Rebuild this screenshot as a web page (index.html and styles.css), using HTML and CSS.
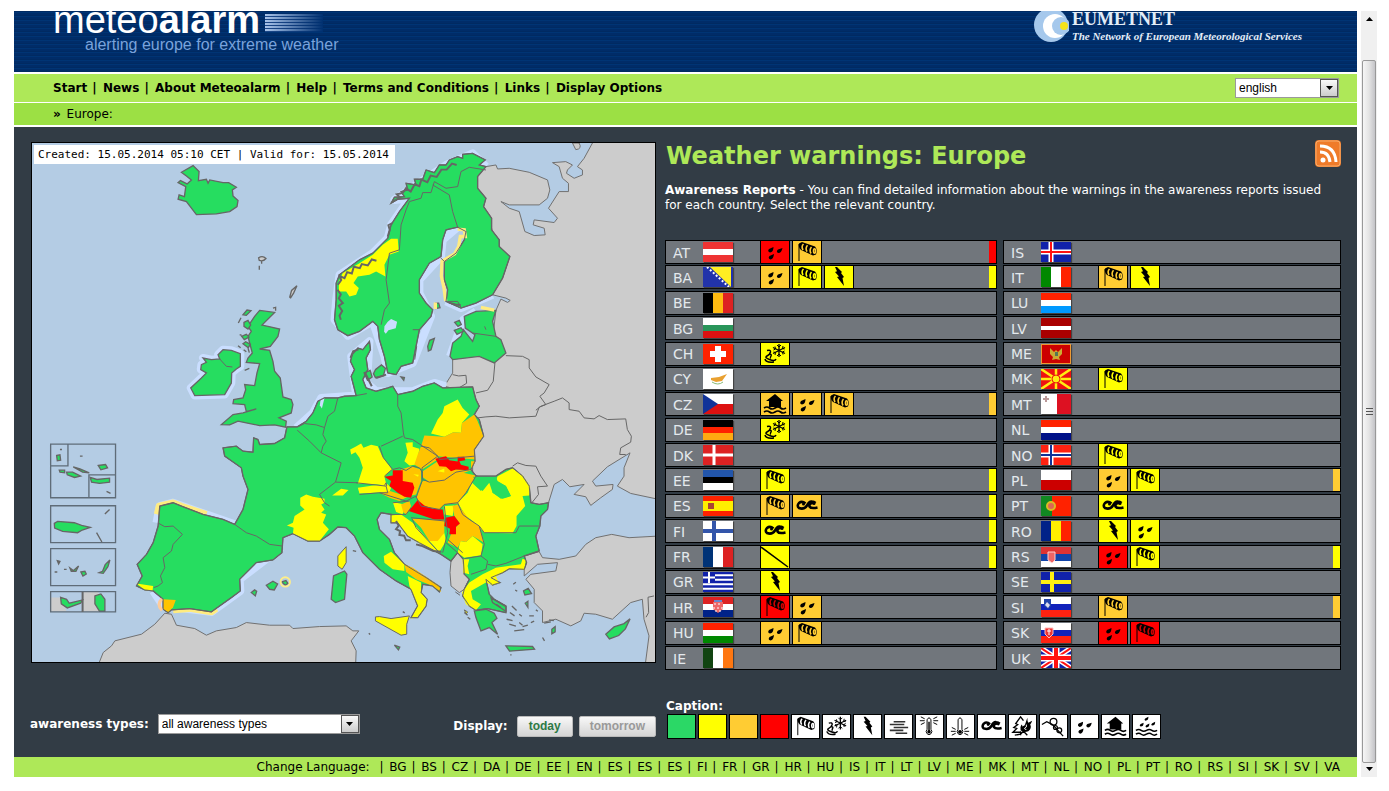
FILE: index.html
```html
<!DOCTYPE html>
<html lang="en">
<head>
<meta charset="utf-8">
<title>Meteoalarm - Weather warnings: Europe</title>
<link rel="stylesheet" href="styles.css">
</head>
<body>
<svg class="defs" aria-hidden="true">
<symbol id="wind" viewBox="0 0 28 22"><path d="M6 20V3" stroke="#000" stroke-width="1" fill="none"/><path d="M6 2.500L9 1l13 4.500q3 3.500 1 8l-3 1L8 9Q5 6 6 2.500z" fill="#000"/><g fill="none" stroke="var(--c)" stroke-width="1.600"><path d="M10.500 3q-2.500 2.500-.5 6M14.500 4.200q-2.500 3-.5 6.500M18.500 6q-2.500 3-.5 6.500"/><ellipse cx="21.500" cy="10" rx="1" ry="2.200"/></g></symbol>
<symbol id="rain" viewBox="0 0 28 22"><g fill="#000"><path d="M12.500 6q0 5-3.500 5.500-3-1-1-3.500zM21.500 7q-1 5-4 5-3-1-.5-3.500zM13 13q-.5 5-3.500 5.500-3-1-1-3.500z"/></g></symbol>
<symbol id="bolt" viewBox="0 0 28 22"><path d="M12 1l5 5-1 1 3 4-1.500 1L19 20l-7-9 2-.5-4-4.500 2-.8L10 1z" fill="#000"/></symbol>
<symbol id="snow" viewBox="0 0 28 22"><g stroke="#000" fill="none"><path stroke-width="1.300" d="M18 1v13M12 4.500l12 6M12 10.500l12-6"/><path d="M16 2l2 2 2-2M16 13l2-2 2 2M12.500 7l2-1-.5-2.500M23.500 8l-2 1 .5 2.500M12.500 9l2 .5-.5 2.500M23.500 6l-2-.5.5-2.500"/><path stroke-width="1.500" d="M6 7.500q4-1 3.500 1.500T6 13t2.500 3.500 6.500-.5M4 16q1 4 9 3M8 11q3 0 2 2t0 2"/></g></symbol>
<symbol id="wave" viewBox="0 0 28 22"><path d="M12.500 8.500Q9 5.500 6 8q-2.500 3 0 5 5 2 8-2.500Q16 6 19 6.500q2 0 3.500 1.500M20 8q-4 0-3.500 3.500Q18 14 24.500 12.500" fill="none" stroke="#000" stroke-width="2.600"/><circle cx="10.500" cy="9" r="1.500"/><circle cx="21" cy="8.500" r="1.500"/></symbol>
<symbol id="flood" viewBox="0 0 28 22"><path d="M14 1l8 7h-2v6H8V8H5z" fill="#000"/><path d="M3 15q3-2 5.500 0t5.500 0 5.500 0 5.500 0M3 19q3-2 5.500 0t5.500 0 5.500 0 5.500 0" fill="none" stroke="#000" stroke-width="1.700"/></symbol>
<symbol id="rainflood" viewBox="0 0 28 22"><path d="M16 1q0 4-3 4-2-1 0-2.500zM11 7q0 4-3 4-2-1 0-2.500zM17 8q0 4-3 4-2-1 0-2.500zM23 6q0 4-3 4-2-1 0-2.500z" fill="#000"/><path d="M3 15q3-2 5.500 0t5.500 0 5.500 0 5.500 0M3 19q3-2 5.500 0t5.500 0 5.500 0 5.500 0" fill="none" stroke="#000" stroke-width="1.500"/></symbol>
<symbol id="fog" viewBox="0 0 28 22"><path d="M9 6h12M5 9h15M9 12h15M5 15h14M11 18h12" stroke="#333" stroke-width="1.600"/></symbol>
<symbol id="heat" viewBox="0 0 28 22"><g fill="none" stroke="#000"><path d="M11.500 14V4q2-4 4 0v10q2 2 0 4.500-2 2-4 0-2-2.500 0-4.500z"/><path d="M9 3L5 1M9 5H4M9 7l-4 2M18 3l4-2M18 5h5M18 7l4 2"/></g><circle cx="13.500" cy="16.500" r="1.800"/><path d="M13.500 6v10" stroke="#000" stroke-width="1.500"/></symbol>
<symbol id="cold" viewBox="0 0 28 22"><g fill="none" stroke="#000"><path d="M11.500 14V4q2-4 4 0v10q2 2 0 4.500-2 2-4 0-2-2.500 0-4.500z"/><path d="M9 14l-4-2M9 16H4M9 18l-4 2M18 14l4-2M18 16h5M18 18l4 2"/></g><circle cx="13.500" cy="16.500" r="2"/></symbol>
<symbol id="fire" viewBox="0 0 28 22"><path d="M12 17H4l4-4-3-1 4-3-2-1 5-7 3 4M12 20v-4M6 20l6-1 3-3 4 4" fill="none" stroke="#000" stroke-width="1.400"/><path d="M19 2q0 4 1 5l4-2q-1 3-2 4 2 4-2 7-5 2-8-1-1-3 1-6 1 1 1 2 3-1 3-3z" fill="#000"/><path d="M18 9q1 3-2 4 0 1 2 1" fill="none" stroke="var(--c)"/></symbol>
<symbol id="avalanche" viewBox="0 0 28 22"><g fill="none" stroke="#000" stroke-width="1.300"><path d="M2 9l5-3 6 3 11 12"/><circle cx="14" cy="6" r="3.500"/><circle cx="20" cy="15" r="2.500"/><circle cx="16" cy="12" r="2"/></g></symbol>
<symbol id="line" viewBox="0 0 28 22"><path d="M0 1l27 20" stroke="#000" stroke-width="1.500"/></symbol>
<symbol id="arrow" viewBox="0 0 7 4"><path d="M0 0h7L3.500 4z"/></symbol>
</svg>

<div class="window">
<div class="page">
<header class="banner">
  <a class="brand" href="#"><span class="name">meteo<b>alarm</b><i class="bars"></i></span><span class="tagline">alerting europe for extreme weather</span></a>
  <a class="network" href="#">
    <svg viewBox="0 0 35 35" class="moon" aria-hidden="true"><circle cx="17" cy="14" r="17" fill="#a5c8ec"/><circle cx="21" cy="15" r="12" fill="#fff"/><circle cx="27" cy="15" r="9" fill="#a5c8ec"/><circle cx="30" cy="15" r="4" fill="#f4e31a"/></svg>
    <span><b class="net">EUMETNET</b><em>The Network of European Meteorological Services</em></span>
  </a>
</header>
<nav class="menu">
  <div class="links"><a href="#">Start</a> | <a href="#">News</a> | <a href="#">About Meteoalarm</a> | <a href="#">Help</a> | <a href="#">Terms and Conditions</a> | <a href="#">Links</a> | <a href="#">Display Options</a></div>
  <span class="picker lang"><select aria-label="Language"><option>english</option></select><span class="drop"><svg><use href="#arrow"/></svg></span></span>
</nav>
<div class="crumbs"><b>»</b> <a href="#">Europe:</a></div>

<main>
<figure class="map">
<figcaption>Created: 15.05.2014 05:10 CET | Valid for: 15.05.2014</figcaption>
<svg viewBox="6 9 1872 1560" role="img" aria-label="Map of weather warnings in Europe">
<defs>
<path id="mainland" d="M580 925L620 920 640 935 670 938 672 895 685 900 690 915 735 912 765 895 772 862 803 862 830 845 850 820 865 785 885 775 925 775 945 770 980 768 965 710 975 690 963 665 968 645 985 625 1000 630 1020 605 1023 630 1010 655 1015 690 1000 720 1010 745 1040 755 1075 745 1090 740 1105 765 1150 755 1180 740 1215 730 1240 745 1330 742 1340 780 1350 800 1335 825 1350 840 1363 890 1335 930 1337 965 1325 990 1340 1010 1400 1010 1430 990 1450 985 1480 1010 1500 1040 1505 1090 1530 1095 1558 1090 1555 1110 1535 1130 1532 1160 1520 1190 1530 1235 1485 1250 1492 1270 1485 1290 1440 1288 1420 1300 1385 1315 1412 1330 1390 1337 1370 1320 1380 1365 1395 1380 1430 1400 1430 1420 1375 1408 1340 1413 1320 1400 1300 1370 1305 1350 1320 1320 1305 1305 1302 1260 1285 1240 1265 1265 1235 1245 1170 1210 1135 1190 1105 1150 1085 1150 1085 1125 1055 1120 1043 1140 1050 1170 1080 1200 1095 1240 1125 1275 1190 1315 1235 1345 1230 1358 1210 1340 1180 1335 1175 1360 1193 1380 1190 1400 1165 1435 1145 1435 1165 1400 1145 1350 1100 1325 1050 1290 1000 1240 975 1190 950 1165 925 1163 900 1185 870 1205 835 1205 790 1183 760 1195 757 1240 730 1262 680 1270 655 1295 630 1320 632 1355 605 1375 545 1418 480 1408 425 1412 415 1420 400 1410 400 1380 370 1355 345 1352 320 1340 337 1310 322 1275 350 1245 370 1210 385 1160 390 1100 430 1090 455 1100 520 1125 580 1140 615 1155 640 1110 655 1050 640 1010 635 985 585 950z"/>
<path id="nordic" d="M915 540L925 570 955 588 990 575 1030 545 1045 560 1050 600 1065 650 1075 700 1100 705 1115 680 1150 670 1162 610 1170 570 1205 530 1210 510 1190 490 1170 460 1170 420 1200 370 1235 350 1240 300 1250 270 1285 262 1310 275 1305 300 1280 340 1245 365 1245 420 1255 450 1250 485 1295 505 1340 490 1390 465 1420 415 1442 350 1410 320 1410 300 1387 270 1387 235 1363 200 1370 175 1345 145 1345 110 1370 80 1350 75 1368 60 1330 40 1300 43 1300 55 1285 50 1260 60 1250 75 1230 75 1215 98 1190 90 1180 118 1155 118 1160 135 1130 130 1135 150 1115 155 1125 170 1095 172 1085 190 1105 178 1140 175 1110 215 1085 255 1075 295 1030 340 990 360 930 405 920 430 920 480z"/>
<path id="baltic" d="M1305 530L1340 515 1400 512 1390 545 1400 590 1415 600 1430 640 1395 670 1350 650 1270 660 1262 650 1270 610 1295 590 1302 570 1330 605 1337 585 1308 565z"/>
<path id="britain" d="M690 512L735 518 697 556 715 560 750 568 745 590 722 620 690 628 720 632 730 665 735 695 752 715 760 772 785 780 790 795 785 820 748 835 770 845 768 863 735 856 690 858 650 850 625 845 600 856 575 855 610 825 640 820 680 808 650 816 645 795 610 792 612 780 640 775 648 750 645 735 675 738 682 700 690 672 650 668 655 655 668 640 660 610 655 590 665 575 655 560 675 530z"/>
<path id="ireland" d="M565 645L580 630 605 632 632 642 632 680 620 688 606 700 605 730 585 765 495 768 483 745 515 715 530 700 513 690 515 675 530 668 520 655 545 660 570 658z"/>
</defs>
<rect x="0" y="0" width="1890" height="1590" fill="#b4cce4"/>
<g class="other">
<path d="M1695 0L1665 55 1645 80 1660 90 1660 105 1635 115 1612 100 1615 90 1630 75 1610 65 1570 68 1590 80 1600 115 1618 130 1618 155 1590 155 1558 205 1585 235 1575 248 1515 240 1512 255 1545 265 1548 285 1515 287 1487 275 1470 215 1440 205 1415 185 1440 195 1530 195 1555 175 1562 150 1555 120 1500 97 1440 85 1405 87 1400 75 1370 80 1335 110 1340 200 1380 235 1400 320 1420 350 1390 465 1430 475 1443 482 1435 488 1415 478 1400 512 1390 600 1270 660 1270 700 1245 740 1330 760 1330 1000 1490 1110 1558 1090 1575 1035 1600 1020 1622 1042 1665 1035 1635 1065 1670 1072 1685 1098 1715 1075 1750 1050 1752 1035 1700 1040 1690 1025 1735 982 1803 940 1785 985 1785 1010 1765 1040 1805 1062 1890 1080V0z"/>
<path d="M1630 9l20 0q10 18-10 20z"/>
<path d="M1890 1190L1800 1195 1748 1185 1700 1195 1670 1215 1640 1250 1590 1260 1540 1255 1530 1237 1485 1250 1485 1310 1525 1275 1585 1270 1580 1295 1505 1305 1490 1320 1515 1350 1515 1390 1540 1415 1540 1450 1580 1440 1625 1460 1655 1445 1665 1422 1700 1425 1750 1440 1805 1390 1840 1380 1845 1440 1860 1490 1847 1590H1890z"/>
<path d="M200 1590L220 1540 245 1520 255 1505 335 1485 375 1455 405 1422 425 1425 440 1458 495 1468 530 1488 560 1475 620 1465 650 1450 720 1458 780 1458 790 1468 870 1462 950 1460 970 1475 988 1475 965 1505 980 1535 978 1590z"/>
<path d="M1265 1265L1285 1240 1305 1260 1305 1305 1320 1320 1305 1350 1290 1360 1265 1340 1262 1300z"/>
</g>
<g class="halo"><use href="#ireland"/><path d="M800 865L850 820 875 775 980 768 965 650 1020 605 1015 690 1000 720 1040 755 1150 755 1215 730 1250 740"/><path d="M1370 80L1330 40 1250 75 1160 135 1095 180 1140 175 1085 255 1075 295 1030 340 930 405 920 480 915 540 955 588 1030 545 1065 650 1075 700 1150 670 1205 530 1170 460 1170 420 1235 350 1240 300 1285 262M1250 485L1295 505 1390 465M1340 515L1302 540 1262 650"/><path d="M380 1150L390 1100 430 1090 615 1155M755 1225L630 1320 632 1355 545 1418 400 1400 370 1355"/></g>
<path class="warnhalo" d="M382 1125L388 1100 430 1090 455 1100 530 1125M430 1412L480 1408 545 1418 560 1408"/>
<g class="green">
<use href="#britain"/><use href="#ireland"/><use href="#nordic"/><use href="#baltic"/><use href="#mainland"/>
<path d="M455 97L490 77 508 95 506 122 530 118 535 130 540 120 580 128 597 128 620 142 608 150 610 168 625 182 622 200 600 215 560 222 500 224 470 185 445 178 448 165 464 170 468 140 445 128 452 122 472 132 485 120 470 108z"/>
<path d="M640 525l12-14 12 2-14 14zM643 548l12-6 8 14-8 12-12-8zM636 590l14-6 8 8-14 8zM640 612l8-6 14 8-6 10zM625 618l8 6M626 550l8-16M645 692l14-6M630 585l6 2M642 630l8 6M655 625l4 14"/>
<path d="M1038 690l18-14 12 10-6 22-24 6-6-12zM1004 700l18-8 6 20-14 10zM1276 548l14-6 6 12-10 6zM1275 572l20-8 8 10-20 10zM1195 620l6-18 14-6-10 34-8 4zM1115 712l10 2-2 8zM1220 490l8 0 4 14-12 2z"/>
<path d="M912 1310L945 1295 952 1305 945 1380 918 1390 905 1380zM710 1338l20-12 14 8-10 18-14-2zM665 1360l10-8 6 4-4 14zM757 1328l12-4 6 8-8 6z"/>
<path d="M1335 1415L1370 1410 1395 1422 1403 1437 1388 1450 1405 1485 1380 1465 1355 1475 1340 1435zM1430 1520l80 2 6 8-75 6zM1730 1485l25-22 30-10 18-14-14 30-20 20-28 10zM1568 1470l10-8 0 16-10 6zM1483 1355l14-8 10 16-20 4zM1488 1392l8-6v18zM1385 1375L1430 1402 1430 1416 1390 1390z"/>
<path d="M1452 1335l8-6M1458 1352l6 4M1448 1400l14 14M1442 1420l14 10M1432 1440l18 4M1440 1455l20 6M1470 1425l8 6M1470 1450l10 8M1480 1462l16-4M1455 1475l30-4M1500 1430l14 0M1505 1450l10-4M1520 1412l6 4M1540 1495l6 10M1545 1452l20-4M1560 1442l14 2M1415 1405l-14-10M1405 1490l4 6M1445 1545v4M1305 1420l10 8M1315 1434l8 6M1095 1518l16 6-4 8zM1018 1482l4 4M1120 1417l6 4M970 1234l10 2"/>
</g>
<path class="lake" d="M1065 560l10-14 10-8 18 8-4 20-22 6-8 10-5-6z"/>
<path class="lake" d="M873 780l12-5-8 32-6-10z"/>
<g transform="translate(900 0)"><path class="yellow" d="M205 297L185 297 160 315 130 345 90 370 40 400 28 425 28 455 50 455 60 470 80 465 88 445 72 430 85 410 120 405 140 395 168 410 165 375 180 345 208 335z"/><path class="coastwarn" d="M385 268l20 2 3 20-15 0-5 30-12 22-38 22-2 45 8 35 5 40M455 503l40 8M318 488v20"/></g>
<g transform="translate(900 750)">
<g class="yellow">
<path d="M62 180L78 172 95 162 102 175 125 166 145 170 158 200 188 240 165 262 172 290 150 285 85 282 100 235 90 205 78 188 65 195z"/>
<path d="M305 132L325 90 340 70 345 50 385 30 400 55 420 75 398 100 395 130 372 128 345 142z"/>
<path d="M228 160L250 158 250 172 270 178 262 225 240 228 225 215 235 190z"/>
<path d="M85 295L172 282 185 295 180 308 90 312z"/><path d="M8 318L35 298 57 302 40 318z"/>
<path d="M385 340L415 310 428 280 455 305 470 280 490 280 490 310 520 328 545 320 530 290 500 275 505 260 550 237 580 258 603 292 600 318 580 320 588 350 562 380 562 410 550 432 465 430 430 395 410 380z"/>
<path d="M183 378L215 375 250 400 330 490 270 462 235 440 205 400 185 400z"/><path d="M190 338L225 345 220 375 200 368z"/><path d="M343 350L375 348 370 380 345 375z"/>
<path d="M300 455L345 430 350 455 330 488z"/><path d="M393 455L410 458 430 440 460 465 455 498 405 505 385 490z"/><path d="M400 510L420 510 415 530 420 555 402 550z"/>
<path d="M398 610L420 580 460 555 500 535 575 525 580 508 590 512 585 542 540 538 500 562 510 582 490 588 470 580 425 605 430 630 455 645 440 663 410 645z"/>
<path d="M163 500L185 487 225 525 225 545 190 540 165 520z"/><path d="M235 560L275 580 275 610 293 630 290 650 265 685 245 688 265 650 240 590z"/>
</g>
<g class="yellow edged"><path d="M138 683L150 682 185 688 240 680 232 705 232 735 215 738 138 695z"/><path d="M25 500L50 472 50 520 38 540 25 530z"/><path d="M405 662l10 6-4 6zM378 608l14 10"/></g>
<g class="orange">
<path d="M285 138L345 142 372 128 395 130 398 100 435 75 445 95 463 140 435 180 438 210 325 200 275 170z"/><path d="M275 170L325 190 325 210 278 240 255 225 265 195z"/>
<path d="M215 240L245 230 275 240 275 275 260 315 240 320 215 300z"/><path d="M150 310L182 305 235 322 210 335 180 325z"/>
<path d="M280 245L325 215 380 240 425 240 425 215 438 215 425 242 345 272 300 278 278 262z"/>
<path d="M270 295L280 275 325 275 380 245 440 258 410 310 385 342 345 345 330 360 275 350 262 325z"/>
<path d="M215 345L240 335 245 350 232 375 222 370z"/><path d="M248 388L345 392 345 430 325 455 300 455 275 415z"/>
<path d="M370 350L385 345 420 390 450 410 465 460 430 440 410 458 395 455 385 475 355 460 365 435 390 400 375 380z"/>
<path d="M225 525L250 535 330 590 335 608 310 590 260 570 230 548z"/>
</g>
<g class="red">
<path d="M165 262L190 258 190 242 220 242 220 275 250 280 255 295 245 325 225 322 205 310 180 290 185 275z"/><path d="M318 208L350 200 360 212 385 216 385 202 405 202 408 212 390 215 395 226 418 232 418 242 380 240 365 245 350 232 330 230z"/>
<path d="M238 365L265 332 285 348 310 358 340 360 345 390 315 390z"/><path d="M348 385L375 380 392 402 380 412 380 435 360 435 362 418 345 410z"/>
</g>
<path class="yellow" d="M325 245l20-8 0 12z"/><path class="yellow" d="M252 254l16 2-2 6z"/>
<path class="green" d="M432 262L500 262 505 275 530 290 545 320 515 328 490 310 480 280 460 305 440 290zM560 410" style="stroke:none"/>
</g>
<path class="yellow" d="M830 1065L850 1072 885 1078 885 1090 875 1095 885 1110 875 1120 890 1125 880 1150 898 1170 870 1205 835 1205 790 1183 792 1165 772 1158 790 1150 795 1130 825 1110 812 1098 812 1075z"/>
<path class="yellow" d="M320 1333L370 1340 368 1355 345 1352z"/><path class="orange" d="M400 1380l38 2-8 22-15 15-15-10z"/><path d="M397 1378q-18 18 0 35" fill="none" stroke="#fc9" stroke-width="10"/><circle cx="767" cy="1328" r="14" fill="none" stroke="#fe8" stroke-width="6"/>
<g class="line">
<use href="#mainland"/><use href="#nordic"/>
<path d="M570 658L590 680 608 682M803 872L840 905 875 940 880 920 890 905M875 940L935 970 918 1028 870 1065 885 1090 900 1100M805 862L825 852 860 856 885 864 895 830 915 815 925 775M885 864L880 885 890 905M918 1028L985 1030M615 1155L650 1180 680 1190 720 1215 757 1220M387 1152L405 1162 430 1160 458 1185 430 1215 425 1235 400 1255 405 1285 392 1310 398 1330 385 1340 372 1345M980 768L1012 762"/>
<path d="M1055 555L1065 510 1080 490 1070 420 1080 340 1110 330 1115 255 1130 210 1140 185 1175 175 1180 158 1205 158 1215 125 1250 145 1285 140 1295 95 1320 82 1370 90M1210 135L1260 165 1270 215 1285 262M1330 580L1400 590M1366 560l4 10M1255 485l30 0 10 18M1235 355l10 10M1162 620l-6 40M1170 570l-20 0"/>
<path d="M1105 765L1105 800 1115 820 1122 880 1125 895 1150 900 1180 920 1210 940 1225 950M1055 920L1120 890M1050 920L1062 955 1090 990 1110 985 1130 993 1150 980 1170 985 1180 1000M1065 1010L1088 990M1175 920L1200 925 1225 950 1230 960 1335 950M1225 950L1178 985 1178 1025 1160 1075M1178 995L1180 1020 1200 1028 1245 1022 1280 998 1325 990M1340 1010L1310 1060 1285 1090 1245 1095 1230 1110 1175 1100 1160 1072M1065 1038L1070 1030 1072 1040M990 1065L1050 1060 1130 1085 1160 1070M980 1030L1070 1040 1075 1060 1050 1060M1090 1090L1140 1085M1085 1125L1130 1125 1145 1105M1145 1135L1250 1145 1255 1180 1240 1240M1148 1138L1160 1165 1230 1240M1245 1100L1250 1145M1285 1090L1300 1125 1320 1140 1350 1160 1365 1180 1460 1180 1470 1160 1530 1160M1350 1160L1365 1215 1355 1250 1305 1258M1355 1250L1375 1265 1370 1290 1325 1305M1250 1210L1285 1240M1375 1275L1400 1280 1430 1272 1485 1250M1255 1200L1300 1240"/>
<path d="M1345 835L1370 832 1400 830 1440 835 1520 830 1530 803 1550 795M1550 795L1532 770 1545 760 1560 735 1520 712 1500 685 1500 660 1480 650 1430 648M1520 812L1535 800 1575 785 1600 775 1620 790 1620 810 1650 815 1665 835 1695 838 1710 828 1735 840 1790 838 1795 870 1807 890 1805 908 1775 925 1772 945 1790 945M1340 760L1375 752 1392 725 1397 670M1270 705l18 4 22-2 2 24-20 12M1450 980L1465 970 1490 978 1520 980 1535 1010 1555 1040 1525 1042 1528 1065 1508 1090M1875 1370l-18 4 2 46-8 14"/>
</g>
<g class="coast"><path d="M925 435l10-14-4-12 14 6 8-18 14 4 6-20 18 4 6-12 18 4 12-18 14 4M924 450l10 14-6 12 12 14-12 8 10 16-8 14 4 12M1090 185l22-12-10-10 18-4 10-14 14 10 12-22 14 6 6-20 18 8 10-20 18 4 14-22 16 0 16-18 14 4M1075 290l6-20-4-14 12-6M963 655l8-20 16-6M1100 1145l8 14-8 10 12 6-2 12 14 2 6 14 14 0M1160 1215l16 4 18 8 18 8 24 2M1007 700l20 40M1040 715l30-10M1258 488l20 6 16 2"/></g>
<g fill="#ccc" stroke="#666" stroke-width="4"><path d="M687 354q12-8 22 2-8 10-20 6zM696 364v8M689 378v12M780 474l6-22 16-14-10 22-10 16M730 505l8-2v10"/></g>
<g transform="translate(0 750)">
<g class="frame"><path d="M62 164H257V325H62zM62 229H114V164M177 325V256H257M62 349H257V460H62zM62 478H257V589H62z"/></g>
<path fill="#ccc" d="M62 625l30 0 18 42H62zM160 608h45l22 59H160z"/>
<g class="green"><path d="M80 198l10-2 2 16-10 2zM90 180h6M150 200h8M130 232l20 6 28 12-20-2zM88 242l16 0 0 8-14-2zM110 248l18 0 24 12-18 4-22-8zM205 228l22-3 6 10-20 6zM181 264l20 6 38-4 0 12-30 4-24-4zM230 306l12 6M73 402l10-6 50 4 22 8 26 6-24 8-14 8-45-4-24-10zM225 374l14-14M200 430l16 28M82 514l8 2-4 8zM102 540h8M74 548h8M120 536l10 8 16-14-8 16-14 0zM153 548l12-2 4 8-10 6zM208 550l10-4 8-20 14-14-6 20-14 20zM92 624l18 6 8 12 40-10-6 10-40 14-18-12zM195 620l18-6 12 16 0 36-16 0-14-22z"/></g>
<path class="frame" d="M62 607H257V668H62z"/><path d="M158 608v60" stroke="#666" stroke-width="6"/>
</g>
</svg>
</figure>

<section class="report">
<div class="title"><h1>Weather warnings: Europe</h1>
<a href="#" aria-label="RSS feed"><svg class="rss" viewBox="0 0 26 27" aria-hidden="true"><rect width="26" height="27" rx="4" fill="#ef7b2a"/><rect x="1" y="1" width="24" height="25" rx="3" fill="none" stroke="#f6ad6c"/><circle cx="8" cy="20" r="2.500" fill="#fff"/><path d="M5 12q9 0 10 10M5 6q15 0 16 16" fill="none" stroke="#fff" stroke-width="3"/></svg></a></div>
<p><b>Awareness Reports</b> - You can find detailed information about the warnings in the awareness reports issued for each country. Select the relevant country.</p>
<div class="lists">
<ul>
<li><a href="#">AT</a><svg class="flag"><path fill="#e33" d="M0 0h30v20H0z"/><path fill="#fff" d="M0 7h30v6H0z"/></svg><svg class="i r"><use href="#rain"/></svg><svg class="i o"><use href="#wind"/></svg><b class="r"></b></li>
<li><a href="#">BA</a><svg class="flag"><path fill="#23a" d="M0 0h30v20H0z"/><path fill="#fe2" d="M7 0h21v20z"/><path d="M4 0l22 20" stroke="#fff" stroke-width="2" stroke-dasharray="2"/></svg><svg class="i o"><use href="#rain"/></svg><svg class="i y"><use href="#wind"/></svg><svg class="i y"><use href="#bolt"/></svg><b class="y"></b></li>
<li><a href="#">BE</a><svg class="flag"><path d="M0 0h10v20H0z"/><path fill="#fb1" d="M10 0h10v20H10z"/><path fill="#d22" d="M20 0h10v20H20z"/></svg></li>
<li><a href="#">BG</a><svg class="flag"><path fill="#fff" d="M0 0h30v7H0z"/><path fill="#29955a" d="M0 7h30v6H0z"/><path fill="#d11" d="M0 13h30v7H0z"/></svg></li>
<li><a href="#">CH</a><svg class="flag"><path fill="#f20" d="M0 0h30v20H0z"/><path d="M15 2v16M7 10h16" stroke="#fff" stroke-width="6"/></svg><svg class="i y"><use href="#snow"/></svg></li>
<li><a href="#">CY</a><svg class="flag"><path fill="#fff" d="M0 0h30v20H0z"/><path fill="#e9a030" d="M8 9l8-1 8-3-5 7-6 1-5-2z"/><path d="M9 13q6 4 11 0" stroke="#8b7" fill="none"/></svg></li>
<li><a href="#">CZ</a><svg class="flag"><path fill="#fff" d="M0 0h30v10H0z"/><path fill="#d11" d="M0 10h30v10H0z"/><path fill="#139" d="M0 0l15 10L0 20z"/></svg><svg class="i o"><use href="#flood"/></svg><svg class="i o"><use href="#rain"/></svg><svg class="i o"><use href="#wind"/></svg><b class="o"></b></li>
<li><a href="#">DE</a><svg class="flag"><path d="M0 0h30v7H0z"/><path fill="#f20" d="M0 7h30v6H0z"/><path fill="#fa1" d="M0 13h30v7H0z"/></svg><svg class="i y"><use href="#snow"/></svg></li>
<li><a href="#">DK</a><svg class="flag"><path fill="#d22" d="M0 0h30v20H0z"/><path d="M11 0v20M0 10h30" stroke="#fff" stroke-width="3"/></svg></li>
<li><a href="#">EE</a><svg class="flag"><path fill="#25a" d="M0 0h30v7H0z"/><path d="M0 7h30v6H0z"/><path fill="#fff" d="M0 13h30v7H0z"/></svg><svg class="i y"><use href="#wind"/></svg><b class="y"></b></li>
<li><a href="#">ES</a><svg class="flag"><path fill="#f20" d="M0 0h30v20H0z"/><path fill="#fe0" d="M0 5h30v10H0z"/><path fill="#a43" d="M5 7h6v6H5z"/></svg><svg class="i o"><use href="#wind"/></svg><svg class="i o"><use href="#wave"/></svg><b class="y"></b></li>
<li><a href="#">FI</a><svg class="flag"><path fill="#fff" d="M0 0h30v20H0z"/><path d="M11 0v20M0 10h30" stroke="#35a" stroke-width="4"/></svg><svg class="i y"><use href="#wave"/></svg><b class="y"></b></li>
<li><a href="#">FR</a><svg class="flag"><path fill="#037" d="M0 0h10v20H0z"/><path fill="#fff" d="M10 0h10v20H10z"/><path fill="#d22" d="M20 0h10v20H20z"/></svg><svg class="i y"><use href="#line"/></svg><b class="y"></b></li>
<li><a href="#">GR</a><svg class="flag"><path fill="#fff" d="M0 0h30v20H0z"/><path d="M0 1h30M0 5.500h30M0 10h30M0 14.500h30M0 19h30" stroke="#12a" stroke-width="2.500"/><path fill="#12a" d="M0 0h12v11H0z"/><path d="M6 0v11M0 5.500h12" stroke="#fff" stroke-width="2"/></svg><svg class="i y"><use href="#bolt"/></svg></li>
<li><a href="#">HR</a><svg class="flag"><path fill="#d22" d="M0 0h30v7H0z"/><path fill="#fff" d="M0 7h30v6H0z"/><path fill="#028" d="M0 13h30v7H0z"/><path fill="#e66" d="M10 5h10v7l-5 4-5-4z"/><path d="M11 7h8M10 11h10M12 14h6" stroke="#fff" stroke-dasharray="2"/><path fill="#68c" d="M11 3h8v2h-8z"/></svg><svg class="i r"><use href="#wind"/></svg><svg class="i o"><use href="#rain"/></svg></li>
<li><a href="#">HU</a><svg class="flag"><path fill="#f20" d="M0 0h30v7H0z"/><path fill="#fff" d="M0 7h30v6H0z"/><path fill="#080" d="M0 13h30v7H0z"/></svg><svg class="i o"><use href="#rain"/></svg><svg class="i o"><use href="#wind"/></svg></li>
<li><a href="#">IE</a><svg class="flag"><path fill="#141" d="M0 0h10v20H0z"/><path fill="#fff" d="M10 0h10v20H10z"/><path fill="#f71" d="M20 0h10v20H20z"/></svg></li>
</ul>
<ul>
<li><a href="#">IS</a><svg class="flag"><path fill="#12a" d="M0 0h30v20H0z"/><path d="M10 0v20M0 10h30" stroke="#fff" stroke-width="5"/><path d="M10 0v20M0 10h30" stroke="#f11" stroke-width="2"/></svg></li>
<li><a href="#">IT</a><svg class="flag"><path fill="#080" d="M0 0h10v20H0z"/><path fill="#fff" d="M10 0h10v20H10z"/><path fill="#f20" d="M20 0h10v20H20z"/></svg><svg class="i o"><use href="#wind"/></svg><svg class="i y"><use href="#bolt"/></svg></li>
<li><a href="#">LU</a><svg class="flag"><path fill="#f20" d="M0 0h30v7H0z"/><path fill="#fff" d="M0 7h30v6H0z"/><path fill="#09f" d="M0 13h30v7H0z"/></svg></li>
<li><a href="#">LV</a><svg class="flag"><path fill="#a00" d="M0 0h30v20H0z"/><path fill="#fff" d="M0 8h30v4H0z"/></svg></li>
<li><a href="#">ME</a><svg class="flag"><path fill="#e93" d="M0 0h30v20H0z"/><path fill="#c00" d="M1 1h28v18H1z"/><path fill="#ca3" d="M15 6l2 2 4-4 0 6-3 3 1 3-4-1-4 1 1-3-3-3 0-6 4 4z"/><path fill="#575" d="M14 8h3v4h-3z"/></svg></li>
<li><a href="#">MK</a><svg class="flag"><path fill="#e11" d="M0 0h30v20H0z"/><path d="M15 0v20M0 10h30M0 0l30 20M30 0L0 20" stroke="#fe1" stroke-width="2.500"/><circle cx="15" cy="10" r="4" fill="#fe1" stroke="#e11"/></svg><svg class="i y"><use href="#wind"/></svg></li>
<li><a href="#">MT</a><svg class="flag"><path fill="#fff" d="M0 0h16v20H0z"/><path fill="#d12" d="M16 0h14v20H16z"/><path d="M5 2v6M2 5h6" stroke="#b99" stroke-width="2"/></svg></li>
<li><a href="#">NL</a><svg class="flag"><path fill="#f20" d="M0 0h30v7H0z"/><path fill="#fff" d="M0 7h30v6H0z"/><path fill="#018" d="M0 13h30v7H0z"/></svg></li>
<li><a href="#">NO</a><svg class="flag"><path fill="#f21" d="M0 0h30v20H0z"/><path d="M10 0v20M0 10h30" stroke="#fff" stroke-width="5"/><path d="M10 0v20M0 10h30" stroke="#139" stroke-width="2"/></svg><svg class="i y"><use href="#wind"/></svg></li>
<li><a href="#">PL</a><svg class="flag"><path fill="#fff" d="M0 0h30v10H0z"/><path fill="#c00" d="M0 10h30v10H0z"/></svg><svg class="i o"><use href="#rain"/></svg><svg class="i y"><use href="#wind"/></svg><b class="o"></b></li>
<li><a href="#">PT</a><svg class="flag"><path fill="#182" d="M0 0h11v20H0z"/><path fill="#f20" d="M11 0h19v20H11z"/><circle cx="10" cy="10" r="4" fill="#d65" stroke="#db2" stroke-width="2"/></svg><svg class="i y"><use href="#wave"/></svg></li>
<li><a href="#">RO</a><svg class="flag"><path fill="#028" d="M0 0h10v20H0z"/><path fill="#fe0" d="M10 0h10v20H10z"/><path fill="#f20" d="M20 0h10v20H20z"/></svg><svg class="i y"><use href="#bolt"/></svg><svg class="i y"><use href="#rain"/></svg></li>
<li><a href="#">RS</a><svg class="flag"><path fill="#d33" d="M0 0h30v7H0z"/><path fill="#14a" d="M0 7h30v7H0z"/><path fill="#fff" d="M0 14h30v6H0z"/><path fill="#e66" stroke="#fcc" d="M7 5h7v8l-3 3-4-3z"/></svg><svg class="i r"><use href="#rain"/></svg><svg class="i y"><use href="#wind"/></svg><b class="y"></b></li>
<li><a href="#">SE</a><svg class="flag"><path fill="#12a" d="M0 0h30v20H0z"/><path d="M11 0v20M0 10h30" stroke="#fe1" stroke-width="4"/></svg></li>
<li><a href="#">SI</a><svg class="flag"><path fill="#fff" d="M0 0h30v7H0z"/><path fill="#12b" d="M0 7h30v6H0z"/><path fill="#f21" d="M0 13h30v7H0z"/><path fill="#24a" d="M3 2h7v7l-3 3-4-3z"/><path fill="#dde" d="M4 8l2-3 3 3-2 3z"/></svg><svg class="i o"><use href="#wind"/></svg><b class="o"></b></li>
<li><a href="#">SK</a><svg class="flag"><path fill="#fff" d="M0 0h30v7H0z"/><path fill="#12b" d="M0 7h30v6H0z"/><path fill="#f21" d="M0 13h30v7H0z"/><path fill="#e33" stroke="#fbb" d="M4 5h8v6l-4 4-4-4z"/><path d="M8 6v6M6 8h4" stroke="#fff"/></svg><svg class="i r"><use href="#rain"/></svg><svg class="i r"><use href="#wind"/></svg></li>
<li><a href="#">UK</a><svg class="flag"><path fill="#12a" d="M0 0h30v20H0z"/><path d="M0 0l30 20M30 0L0 20" stroke="#fff" stroke-width="5"/><path d="M0 0l30 20M30 0L0 20" stroke="#f11" stroke-width="2"/><path d="M15 0v20M0 10h30" stroke="#fff" stroke-width="7"/><path d="M15 0v20M0 10h30" stroke="#f11" stroke-width="4"/></svg></li>
</ul>
</div>
</section>

<form class="controls">
<label for="types">awareness types:</label>
<span class="picker types"><select id="types"><option>all awareness types</option></select><span class="drop"><svg><use href="#arrow"/></svg></span></span>
<span class="display">Display:</span>
<button type="button" class="on">today</button><button type="button">tomorrow</button>
</form>

<section class="legend"><b>Caption:</b>
<div class="keys"><i class="g"></i><i class="y"></i><i class="o"></i><i class="r"></i><svg><use href="#wind"/></svg><svg><use href="#snow"/></svg><svg><use href="#bolt"/></svg><svg><use href="#fog"/></svg><svg><use href="#heat"/></svg><svg><use href="#cold"/></svg><svg><use href="#wave"/></svg><svg><use href="#fire"/></svg><svg><use href="#avalanche"/></svg><svg><use href="#rain"/></svg><svg><use href="#flood"/></svg><svg><use href="#rainflood"/></svg></div>
</section>
</main>

<footer><span>Change Language:</span> | <a href="#">BG</a> | <a href="#">BS</a> | <a href="#">CZ</a> | <a href="#">DA</a> | <a href="#">DE</a> | <a href="#">EE</a> | <a href="#">EN</a> | <a href="#">ES</a> | <a href="#">ES</a> | <a href="#">ES</a> | <a href="#">FI</a> | <a href="#">FR</a> | <a href="#">GR</a> | <a href="#">HR</a> | <a href="#">HU</a> | <a href="#">IS</a> | <a href="#">IT</a> | <a href="#">LT</a> | <a href="#">LV</a> | <a href="#">ME</a> | <a href="#">MK</a> | <a href="#">MT</a> | <a href="#">NL</a> | <a href="#">NO</a> | <a href="#">PL</a> | <a href="#">PT</a> | <a href="#">RO</a> | <a href="#">RS</a> | <a href="#">SI</a> | <a href="#">SK</a> | <a href="#">SV</a> | <a href="#">VA</a></footer>
</div>

<div class="scroll" aria-hidden="true"><svg class="up"><use href="#arrow"/></svg><div class="thumb"><i></i><i></i><i></i></div><svg><use href="#arrow"/></svg></div>
</div>
</body>
</html>
```
FILE: styles.css
```css
* { box-sizing: border-box; }
body { margin: 0; padding: 11px 12px 14px 14px; background: #fff; color: #000; font: 12px/15px "DejaVu Sans", sans-serif; }
a { color: inherit; text-decoration: none; }
.defs { position: absolute; width: 0; height: 0; }
.window { display: flex; gap: 4px; }
.page { flex: 1; min-width: 0; }

.banner { display: flex; justify-content: space-between; height: 63px; padding: 0 55px 0 39px; overflow: hidden; border-bottom: 2px solid #fff; background: repeating-linear-gradient(#002a62 0 1px, #003474 1px 2px, #002c68 2px 4px); }
.brand { display: block; color: #fff; font-family: "Liberation Sans", sans-serif; }
.name { display: flex; align-items: center; height: 18px; font-size: 38px; line-height: 18px; }
.bars { width: 58px; height: 18px; margin: 6px 0 0 5px; background: linear-gradient(90deg, transparent, #003070), repeating-linear-gradient(#a9c4ea 0 2px, #1c4788 2px 3px); }
.tagline { display: block; padding: 6px 0 0 32px; color: #79a3dc; font-size: 16px; line-height: 20px; }
.network { display: flex; gap: 3px; color: #e3edf8; font-family: "Liberation Serif", serif; }
.moon { width: 35px; height: 35px; }
.net { display: block; font-size: 18px; line-height: 16px; }
.network em { display: block; padding-top: 2px; font-size: 11px; line-height: 14px; font-weight: bold; }

.menu { display: flex; align-items: center; justify-content: space-between; height: 29px; padding: 0 18px 0 39px; border-bottom: 1px solid #fff; background: #aee858; font-weight: bold; }
.links a, footer a { margin: 0 1px 0 2px; }
.links a:first-child { margin-left: 0; }
.crumbs { height: 24px; padding: 4px 39px; border-bottom: 2px solid #fff; background: #9ce044; }
.crumbs a { margin-left: 2px; }

.picker { position: relative; display: block; height: 20px; }
.picker select { display: block; width: 100%; height: 100%; padding: 0 20px 0 3px; border: 1px solid #9a9a9a; border-radius: 0; background: #fff; color: #000; font: 12px "Liberation Sans", sans-serif; appearance: none; }
.lang { width: 104px; }
.types { width: 202px; }
.drop { position: absolute; top: 1px; right: 1px; bottom: 1px; display: grid; place-items: center; width: 18px; border: 1px solid #555; background: linear-gradient(#fafafa, #ccc); pointer-events: none; }
.drop svg, .scroll svg { width: 7px; height: 4px; }

main { display: grid; grid-template-columns: 625fr 676fr; gap: 29px 9px; padding: 13px 16px 18px 17px; background: #323c45; color: #fff; }
.map { position: relative; align-self: start; margin: 2px 0 0; border: 1px solid #000; }
.map > svg { display: block; width: 100%; }
figcaption { position: absolute; left: 2px; top: 2px; padding: 2px 6px 2px 4px; background: #fff; color: #000; font: 11px/15px "DejaVu Sans Mono", monospace; }
.other path { fill: #ccc; stroke: #707070; stroke-width: 3; }
.halo { fill: none; stroke: #cadeff; stroke-width: 24; stroke-linejoin: round; }
.warnhalo { fill: none; stroke: #ffec80; stroke-width: 20; stroke-linejoin: round; }
.coastwarn { fill: none; stroke: #ffec80; stroke-width: 10; }
.green { fill: #26dd60; stroke: #666; stroke-width: 4; }
.lake { fill: #cadeff; stroke: none; }
.yellow { fill: #ff0; }
.edged { stroke: #666; stroke-width: 3; }
.orange { fill: #ffc400; }
.red { fill: #f00; }
.line { fill: none; stroke: #666; stroke-width: 3; stroke-linejoin: round; }
.line use { fill: none; }
.coast { fill: none; stroke: #666; stroke-width: 6; }
.frame { fill: none; stroke: #5f6c78; stroke-width: 4; }

.title { display: flex; align-items: center; justify-content: space-between; height: 27px; }
h1 { margin: 0; padding: 5px 0 0 1px; color: #aee858; font-size: 24px; line-height: 28px; }
.rss { display: block; width: 26px; height: 27px; }
.report p { margin: 16px 0 27px; }
.lists { display: grid; grid-template-columns: 332fr 338fr; gap: 6px; }
.lists ul { display: flex; flex-direction: column; justify-content: space-between; min-height: 430px; margin: 0; padding: 0; list-style: none; }
.lists li { display: flex; align-items: center; gap: 2px; height: 24px; padding-left: 7px; border: 1px solid #000; background: #71767c; }
.lists a { width: 28px; padding-top: 1px; color: #e4e9ed; font-size: 14px; line-height: 20px; white-space: nowrap; }
.lists b { width: 7px; height: 22px; margin-left: auto; }
.flag { width: 30px; height: 20px; margin-right: 25px; box-shadow: 1px 1px 1px #444; }
.i { width: 30px; height: 22px; border: solid #000; border-width: 0 1px; }
.g { background: #2bd866; }
.y { --c: #ff0; background: #ff0; }
.o { --c: #fc3; background: #fc3; }
.r { --c: #f00; background: #f00; }
.i.r { --c: #c00; }

.controls { display: flex; align-items: center; align-self: end; height: 26px; font-weight: bold; white-space: nowrap; }
.controls .types { margin: 0 auto 4px 9px; }
.controls label { margin: 0 0 4px -1px; }
.display { margin-right: 9px; }
button { height: 21px; margin-left: 6px; padding: 0 10px; border: 1px solid #bbb; border-radius: 2px; background: linear-gradient(#f8f8f8, #d4d4d4); color: #999; font: bold 12px "Liberation Sans", sans-serif; }
.display + button { margin-left: 0; padding: 0 11px; }
button.on { color: #2d7a45; }
.legend > b { display: block; padding-left: 1px; }
.keys { display: flex; gap: 2px; padding-left: 2px; }
.keys > * { --c: #fff; width: 29px; height: 25px; border: 1px solid #000; background: #fff; }
.keys .g { background: #2bd866; }
.keys .y { background: #ff0; }
.keys .o { background: #fc3; }
.keys .r { background: #f00; }

footer { min-height: 20px; padding: 3px 16px 2px; background: #aee858; text-align: right; white-space: nowrap; }
footer span { margin-right: 6px; }
.scroll { display: flex; flex-direction: column; align-items: center; width: 16px; padding: 6px 0; background: #f0f0f0; }
.up { transform: rotate(180deg); }
.thumb { flex: 1; display: flex; flex-direction: column; align-items: center; justify-content: center; gap: 2px; width: 14px; margin: 39px 0 4px; border: 1px solid #999; border-radius: 2px; background: linear-gradient(90deg, #f6f6f6, #e4e4e4 50%, #c4c4c8); }
.thumb i { width: 7px; height: 1px; background: #555; }
```
